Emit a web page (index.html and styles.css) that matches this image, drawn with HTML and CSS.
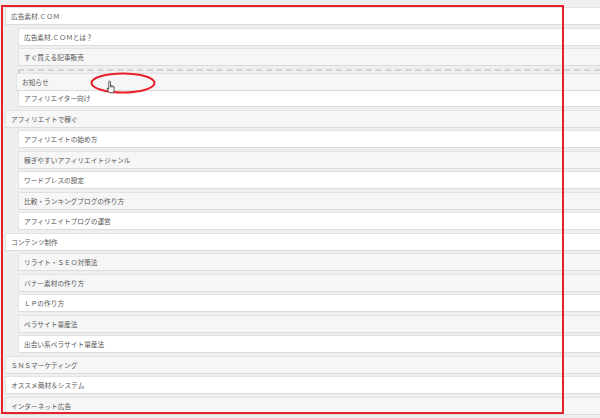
FILE: index.html
```html
<!DOCTYPE html>
<html lang="ja">
<head>
<meta charset="utf-8">
<title>メニュー</title>
<link rel="stylesheet" href="styles.css">
</head>
<body>
<div class="menu">
  <div class="item">広告素材.ＣＯＭ</div>
  <div class="item sub">広告素材.ＣＯＭとは？</div>
  <div class="item sub alt">すぐ買える記事販売</div>
  <div class="placeholder">
    <div class="item dragging alt">お知らせ</div>
  </div>
  <div class="item sub">アフィリエイター向け</div>
  <div class="item alt">アフィリエイトで稼ぐ</div>
  <div class="item sub">アフィリエイトの始め方</div>
  <div class="item sub alt">稼ぎやすいアフィリエイトジャンル</div>
  <div class="item sub">ワードプレスの設定</div>
  <div class="item sub alt">比較・ランキングブログの作り方</div>
  <div class="item sub">アフィリエイトブログの運営</div>
  <div class="item">コンテンツ制作</div>
  <div class="item sub alt">リライト・ＳＥＯ対策法</div>
  <div class="item sub alt">バナー素材の作り方</div>
  <div class="item sub">ＬＰの作り方</div>
  <div class="item sub alt">ペラサイト量産法</div>
  <div class="item sub">出会い系ペラサイト量産法</div>
  <div class="item alt">ＳＮＳマーケティング</div>
  <div class="item">オススメ商材＆システム</div>
  <div class="item alt">インターネット広告</div>
</div>
<div class="frame"></div>
<svg class="ellipse" width="70" height="24" viewBox="0 0 70 24">
  <ellipse cx="35" cy="12" rx="31.5" ry="9.5" fill="none" stroke="#e8202a" stroke-width="2"/>
</svg>
<svg class="cursor" width="10" height="14" viewBox="0 0 18 24">
  <path d="M5 2.2 Q6.5 0.2 8 2.2 L8 9.5 Q9 8.3 10.2 9.5 L10.2 10.4 Q11.3 9.3 12.4 10.5 L12.4 11.4 Q13.5 10.4 14.6 11.6 L14.6 17 Q14.6 20 12.8 22.5 L6.2 22.5 Q4.4 20.5 2.2 15.6 Q1.6 13.2 3.4 13.8 L5 16 Z" fill="#fff" stroke="#222" stroke-width="1.3" stroke-linejoin="round"/>
  <path d="M8 9.5 L8 13 M10.2 10.4 L10.2 13 M12.4 11.4 L12.4 13" stroke="#222" stroke-width="1" fill="none"/>
</svg>
</body>
</html>
```

FILE: styles.css
```css
html, body {
  margin: 0;
  padding: 0;
}
body {
  width: 600px;
  height: 418px;
  overflow: hidden;
  background: #efefef;
  position: relative;
  font-family: "Noto Sans CJK JP", "Noto Sans", sans-serif;
}
.menu {
  padding-top: 7px;
  display: flex;
  flex-direction: column;
  gap: 2.5px;
}
.item {
  box-sizing: border-box;
  height: 18px;
  margin-left: 5px;
  border: 1px solid #e2e2e2;
  border-right: none;
  border-bottom-color: #dcdcdc;
  background: #ffffff;
  display: flex;
  align-items: center;
  padding-left: 5px;
  font-size: 6.7px;
  color: #555;
  white-space: nowrap;
}
.item.sub {
  margin-left: 18px;
}
.item.alt {
  background: #f6f6f6;
}
.placeholder {
  box-sizing: border-box;
  height: 18px;
  margin-left: 18px;
  border: 2px dashed #d2d2d2;
  border-right: none;
  position: relative;
}
.item.dragging {
  position: absolute;
  left: -4px;
  right: 0;
  top: 2px;
  margin: 0;
  height: 18px;
  box-shadow: 0 0 1px rgba(0,0,0,0.08);
}
.frame {
  position: absolute;
  left: 1px;
  top: 5px;
  width: 563px;
  height: 409px;
  box-sizing: border-box;
  border: 2.5px solid #e8202a;
}
.ellipse {
  position: absolute;
  left: 88px;
  top: 71px;
}
.cursor {
  position: absolute;
  left: 106px;
  top: 80px;
}
```
